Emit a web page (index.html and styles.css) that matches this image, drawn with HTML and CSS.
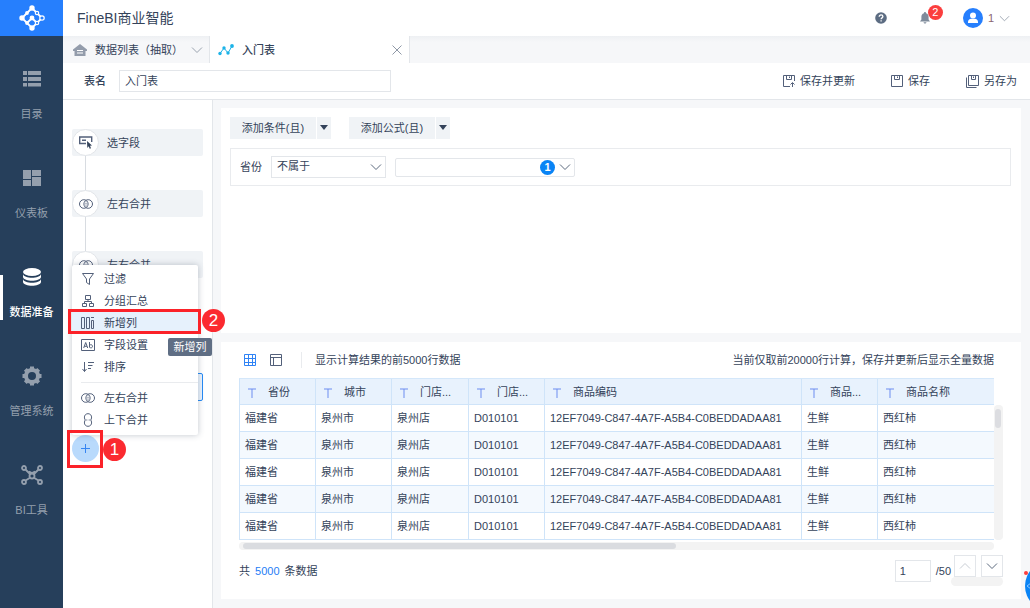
FILE: index.html
```html
<!DOCTYPE html>
<html lang="zh-CN">
<head>
<meta charset="utf-8">
<title>FineBI商业智能</title>
<link rel="stylesheet" href="styles.css">
</head>
<body>
<svg class="defs" aria-hidden="true">
  <symbol id="chevron" viewBox="0 0 12 12"><path d="M1 3.500 6 8.500 11 3.500"/></symbol>
  <symbol id="join" viewBox="0 0 14 12"><circle cx="4.800" cy="6" r="4.300"/><circle cx="9.200" cy="6" r="4.300"/><path d="M7 4.800v1M7 6.600v1"/></symbol>
  <symbol id="text-type" viewBox="0 0 10 10"><path d="M1 1h8M5 1v9"/></symbol>
</svg>
<div class="app">
  <nav class="sidebar">
    <a class="logo" href="#" aria-label="FineBI">
      <svg viewBox="0 0 28 28" width="28" height="28"><g fill="none" stroke="#fff" stroke-width="1.800"><path d="M14 4 4 14l10 10 10-10zM9 19l5-5 5 5"/></g><g fill="#fff"><circle cx="14" cy="4" r="2.700"/><circle cx="4" cy="14" r="2.700"/><circle cx="14" cy="24" r="2.700"/><circle cx="9" cy="9" r="1.900"/><circle cx="9" cy="19" r="1.900"/><circle cx="14" cy="14" r="2.400"/></g><g fill="#267ffd" stroke="#fff" stroke-width="1.200"><circle cx="19" cy="9" r="1.700"/><circle cx="19" cy="19" r="1.700"/><circle cx="24" cy="14" r="2.200"/></g></svg>
    </a>
    <a class="nav-item" href="#"><svg viewBox="0 0 20 20" width="20" height="20" fill="currentColor"><path d="M1 2h4v4H1zM6 2h13v4H6zM1 8h4v4H1zM6 8h13v4H6zM1 14h4v3.500H1zM6 14h13v3.500H6z"/></svg><span>目录</span></a>
    <a class="nav-item" href="#"><svg viewBox="0 0 20 20" width="20" height="20" fill="currentColor"><path d="M1 2h8v9H1zM10 2h9v6h-9zM1 12h8v6H1zM10 9h9v9h-9z"/></svg><span>仪表板</span></a>
    <a class="nav-item active" href="#"><svg viewBox="0 0 20 20" width="20" height="20" fill="currentColor"><ellipse cx="10" cy="5" rx="9" ry="4"/><path d="M1 7c1 5 17 5 18 0v3c-1 5-17 5-18 0zM1 12c1 5 17 5 18 0v3c-1 5-17 5-18 0z"/></svg><span>数据准备</span></a>
    <a class="nav-item" href="#"><svg viewBox="0 0 20 20" width="20" height="20"><circle cx="10" cy="10" r="6" fill="none" stroke="currentColor" stroke-width="4"/><path d="M10 .5v4M10 15.500v4M.5 10h4M15.500 10h4M3.300 3.300 6 6M14 14l2.700 2.700M3.300 16.700 6 14M14 6l2.700-2.700" stroke="currentColor" stroke-width="4"/></svg><span>管理系统</span></a>
    <a class="nav-item" href="#"><svg viewBox="0 0 22 20" width="22" height="20" fill="none" stroke="currentColor" stroke-width="1.800"><circle cx="3" cy="3" r="2"/><circle cx="19" cy="3" r="2"/><circle cx="3" cy="17" r="2"/><circle cx="19" cy="17" r="2"/><circle cx="11" cy="11" r="2.500"/><path d="m4.500 4.500 5 5M17.500 4.500l-5 5M4.500 15.500l5-3M17.500 15.500l-5-3M8 6.500l3 1.500 3-1.500"/></svg><span>BI工具</span></a>
  </nav>

  <div class="main">
    <header class="header">
      <h1>FineBI商业智能</h1>
      <div class="user-tools">
        <button class="bare" aria-label="帮助"><svg viewBox="0 0 12 12" width="12" height="12"><circle cx="6" cy="6" r="5.800" fill="#5c6c82"/><path d="M4.200 4.700c0-2.400 3.700-2.200 3.700-.1 0 1.300-1.800 1.300-1.800 2.600M6.100 8.300v1.300" fill="none" stroke="#fff" stroke-width="1.300"/></svg></button>
        <button class="bare bell" aria-label="消息"><svg viewBox="0 0 12 12" width="12" height="12" fill="#7f8b9b"><path d="M6 0c.7 0 1 .5 1 1.200C9 1.700 9.600 3.300 9.600 5v2.500L11 9.500H1l1.400-2V5C2.400 3.300 3 1.700 5 1.200 5 .5 5.300 0 6 0zM4.500 10.300h3c-.3 1.600-2.700 1.600-3 0z"/></svg><span class="count">2</span></button>
        <button class="bare account"><svg viewBox="0 0 20 20" width="20" height="20"><circle cx="10" cy="10" r="10" fill="#267ffd"/><circle cx="10" cy="7.500" r="3" fill="#fff"/><path d="M5 15v-1.500c0-1.500 2-2.800 3-2.800h4c1 0 3 1.300 3 2.800V15z" fill="#fff"/></svg><span>1</span><svg class="chev pale" width="11" height="11"><use href="#chevron"/></svg></button>
      </div>
    </header>

    <div class="tabs">
      <button class="tab"><svg viewBox="0 0 14 12" width="14" height="12"><path d="M7 0 0 5.500V7h1.500v5h11V7H14V5.500z" fill="#939cab"/><path d="M4 6.500h6M4 9h6" stroke="#fff"/></svg><span>数据列表（抽取）</span><svg class="chev pale" width="12" height="12"><use href="#chevron"/></svg></button>
      <div class="tab current"><svg viewBox="0 0 16 12" width="16" height="12" fill="#1cb3e8"><path d="M2 9.500 6 4l4 5 4-7" fill="none" stroke="#1cb3e8"/><circle cx="2" cy="9.500" r="1.700"/><circle cx="6" cy="4" r="1.700"/><circle cx="10" cy="9" r="1.700"/><circle cx="14" cy="2" r="1.900"/></svg><strong>入门表</strong><button class="bare close" aria-label="关闭"><svg viewBox="0 0 10 10" width="10" height="10" stroke="#8f98a6"><path d="m.5.5 9 9M9.500.5l-9 9"/></svg></button></div>
    </div>

    <div class="name-bar">
      <label for="table-name">表名</label>
      <input id="table-name" type="text" value="入门表">
      <div class="actions">
        <button class="bare"><svg viewBox="0 0 12 12" width="12" height="12" class="line"><path d="M11.500 6V.5H.5v11H7M3.500.5v4h5v-4M6.500 1.500v1.500M9.500 12V8M7.500 9.500l2-2 2 2"/></svg>保存并更新</button>
        <button class="bare"><svg viewBox="0 0 12 12" width="12" height="12" class="line"><path d="M.5.5h11v11H.5zM3.500.5v4h5v-4M6.500 1.500v1.500"/></svg>保存</button>
        <button class="bare"><svg viewBox="0 0 13 13" width="13" height="13" class="line"><path d="M2.500.5h10v10h-10zM5.500.5v4h4v-4M7.500 1.500v1.500M.5 2.500v10h10"/></svg>另存为</button>
      </div>
    </div>

    <div class="workspace">
      <aside class="steps">
        <ol>
          <li><button class="step"><span class="dot"><svg viewBox="0 0 14 13" width="14" height="13"><path d="M7 7.500H.7V1h12v5M3 4.300h4" fill="none" stroke="#53607a" stroke-width="1.400"/><path d="m8 5 5 4.500-2 .3 1 2.400-1.300.5-1-2.400L8.300 12z" fill="#34435a"/></svg></span>选字段</button></li>
          <li><button class="step"><span class="dot"><svg class="line" width="14" height="12"><use href="#join"/></svg></span>左右合并</button></li>
          <li class="long"><button class="step"><span class="dot"><svg class="line" width="14" height="12"><use href="#join"/></svg></span>左右合并</button></li>
          <li><button class="step selected" aria-label="当前步骤"><span class="dot"></span></button></li>
        </ol>
        <button class="add" aria-label="添加步骤"><svg viewBox="0 0 9 9" width="9" height="9" stroke="#3685f2"><path d="M4.500 0v9M0 4.500h9"/></svg></button>

        <div class="menu" role="menu">
          <button role="menuitem"><svg viewBox="0 0 14 14" width="14" height="14" class="line"><path d="M1.500 1.500h11L8.500 7v5.500l-3-2V7z"/></svg>过滤</button>
          <button role="menuitem"><svg viewBox="0 0 14 14" width="14" height="14" class="line"><path d="M4.500 1.500h5v4h-5zM1.500 9.500h4v3h-4zM8.500 9.500h4v3h-4zM7 5.500v2M3.500 9.500v-2h7v2"/></svg>分组汇总</button>
          <button role="menuitem" class="hover"><svg viewBox="0 0 14 14" width="14" height="14" class="line"><path d="M.5 1.500h3v11h-3zM5.500 1.500h3v11h-3zM10.500 4.500h2v8h-2zM10 1.500h3"/></svg>新增列</button>
          <button role="menuitem"><svg viewBox="0 0 14 14" width="14" height="14" class="line"><path d="M.5 1.500h13v11H.5zM2.700 10l2-5.500 2 5.500M3.500 8.300h2.400M8.500 4v5.500M8.500 7.500c1-1.500 3-.8 3 .8s-2 2.200-3 .7"/></svg>字段设置</button>
          <button role="menuitem"><svg viewBox="0 0 14 14" width="14" height="14" class="line"><path d="M3.500 2v9.500M1.500 9l2 2.500 2-2.500M7 2.500h6M7 5.500h4.500M7 8.500h3"/></svg>排序</button>
          <hr>
          <button role="menuitem"><svg class="line" width="14" height="12"><use href="#join"/></svg>左右合并</button>
          <button role="menuitem"><svg viewBox="0 0 14 14" width="14" height="14" class="line"><path d="M4.300 7C2.500 4.500 3.500.7 7 .7s4.500 3.800 2.700 6.300C11.500 9.500 10.500 13.300 7 13.300S2.500 9.500 4.300 7zM5.300 7h1M7.700 7h1"/></svg>上下合并</button>
        </div>
        <div class="tooltip" role="tooltip">新增列</div>
        <div class="frame frame-item"></div><div class="mark mark-item">2</div>
        <div class="frame frame-add"></div><div class="mark mark-add">1</div>
      </aside>

      <main class="content">
        <section class="card filters">
          <div class="button-row">
            <div class="split"><button>添加条件(且)</button><button aria-label="更多条件"><i></i></button></div>
            <div class="split"><button>添加公式(且)</button><button aria-label="更多公式"><i></i></button></div>
          </div>
          <div class="condition">
            <label for="operator">省份</label>
            <div class="picker"><select id="operator"><option>不属于</option></select><svg class="chev" width="12" height="12"><use href="#chevron"/></svg></div>
            <button class="values" aria-label="选择值"><span class="tally">1</span><svg class="chev" width="12" height="12"><use href="#chevron"/></svg></button>
          </div>
        </section>

        <section class="card preview">
          <div class="preview-bar">
            <button class="bare" aria-label="表格视图"><svg viewBox="0 0 12 12" width="12" height="12" fill="none" stroke="#2f83f5"><path d="M.5.5h11v11H.5zM4.500 0v12M8.500 0v12M0 4.500h12M0 8.500h12"/></svg></button>
            <button class="bare" aria-label="字段视图"><svg viewBox="0 0 12 12" width="12" height="12" class="line"><path d="M.5.5h11v11H.5zM0 3.500h12M3.500 3.500V12"/></svg></button>
            <span class="hint">显示计算结果的前5000行数据</span>
            <span class="note">当前仅取前20000行计算，保存并更新后显示全量数据</span>
          </div>
          <div class="grid">
            <table>
              <colgroup><col class="c-s"><col class="c-s"><col class="c-m"><col class="c-s"><col class="c-code"><col class="c-s"><col></colgroup>
              <thead><tr>
                <th><svg><use href="#text-type"/></svg>省份</th><th><svg><use href="#text-type"/></svg>城市</th><th><svg><use href="#text-type"/></svg>门店...</th><th><svg><use href="#text-type"/></svg>门店...</th><th><svg><use href="#text-type"/></svg>商品编码</th><th><svg><use href="#text-type"/></svg>商品...</th><th><svg><use href="#text-type"/></svg>商品名称</th>
              </tr></thead>
              <tbody>
                <tr><td>福建省</td><td>泉州市</td><td>泉州店</td><td>D010101</td><td>12EF7049-C847-4A7F-A5B4-C0BEDDADAA81</td><td>生鲜</td><td>西红柿</td></tr>
                <tr><td>福建省</td><td>泉州市</td><td>泉州店</td><td>D010101</td><td>12EF7049-C847-4A7F-A5B4-C0BEDDADAA81</td><td>生鲜</td><td>西红柿</td></tr>
                <tr><td>福建省</td><td>泉州市</td><td>泉州店</td><td>D010101</td><td>12EF7049-C847-4A7F-A5B4-C0BEDDADAA81</td><td>生鲜</td><td>西红柿</td></tr>
                <tr><td>福建省</td><td>泉州市</td><td>泉州店</td><td>D010101</td><td>12EF7049-C847-4A7F-A5B4-C0BEDDADAA81</td><td>生鲜</td><td>西红柿</td></tr>
                <tr><td>福建省</td><td>泉州市</td><td>泉州店</td><td>D010101</td><td>12EF7049-C847-4A7F-A5B4-C0BEDDADAA81</td><td>生鲜</td><td>西红柿</td></tr>
              </tbody>
            </table>
            <div class="scroll-y"><i></i></div>
            <div class="scroll-x"><i></i></div>
          </div>
          <footer class="pager">
            <p>共 <b>5000</b> 条数据</p>
            <input type="text" value="1" aria-label="页码"><span>/50</span>
            <div class="turn"><div class="turn-buttons"><button disabled aria-label="上一页"><svg class="chev up" width="12" height="12"><use href="#chevron"/></svg></button><button aria-label="下一页"><svg class="chev" width="12" height="12"><use href="#chevron"/></svg></button></div><div class="turn-track"></div></div>
          </footer>
        </section>
      </main>
    </div>
  </div>
  <div class="assistant"><button aria-label="助手"><svg viewBox="0 0 10 12" width="10" height="12"><path d="M6 3 2 6l4 3" fill="none" stroke="#8cc4ff"/></svg></button><i></i></div>
</div>
</body>
</html>
```
FILE: styles.css
```css
* { box-sizing: border-box; }
body, h1, p, ol { margin: 0; padding: 0; }
body, button, input, select {
  font-family: "Liberation Sans", "Noto Sans CJK SC", sans-serif;
  font-size: 11px;
  line-height: 16px;
  color: #34435a;
}
button { margin: 0; padding: 0; border: 0; background: none; text-align: left; }
input, select { border: 1px solid #e3e6ea; background: #fff; border-radius: 0; }
svg { display: block; flex: none; }
ol { list-style: none; }
.defs { position: absolute; width: 0; height: 0; }
.line { fill: none; stroke: #53607a; }
.chev { fill: none; stroke: #5c6a7e; }
.chev.pale { stroke: #9aa3af; }
.chev.up { transform: rotate(180deg); }
.bare { display: flex; align-items: center; gap: 5px; }

.app { position: relative; display: flex; min-height: 100vh; overflow: hidden; }

.sidebar { flex: none; width: 63px; background: #263f5b; }
.logo { display: flex; justify-content: center; align-items: center; height: 36px; margin-bottom: 32px; background: #267ffd; }
.nav-item {
  position: relative;
  display: flex;
  flex-direction: column;
  align-items: center;
  gap: 17px;
  height: 99px;
  color: #949fad;
  text-decoration: none;
}
.nav-item svg { margin-top: 1px; }
.nav-item.active { color: #fff; font-weight: 500; }
.nav-item.active::before { content: ""; position: absolute; left: 0; top: 9px; width: 3px; height: 45px; background: #fff; }

.main { flex: 1; min-width: 0; display: flex; flex-direction: column; }
.header { display: flex; justify-content: space-between; align-items: center; height: 36px; padding: 0 20px 0 14px; }
.header h1 { font-size: 14px; line-height: 20px; font-weight: 400; color: #34435a; }
.user-tools { display: flex; align-items: center; gap: 32px; }
.bell { position: relative; }
.count {
  position: absolute;
  left: 9px;
  top: -7px;
  width: 15px;
  height: 15px;
  border-radius: 50%;
  background: #fb3e3e;
  color: #fff;
  font-size: 11px;
  line-height: 15px;
  text-align: center;
}
.account { gap: 5px; color: #8a6571; }

.tabs { display: flex; height: 27px; background: linear-gradient(#eef0f3, #f6f7f9 6px); }
.tab { display: flex; align-items: center; gap: 8px; width: 147px; padding: 0 10px; border-right: 1px solid #e3e6ea; white-space: nowrap; }
.tab .chev { margin-left: auto; }
.tab.current { width: 200px; padding: 0 7px 0 8px; background: #fff; }
.tab strong { font-weight: 500; }
.close { margin-left: auto; }

.name-bar { display: flex; align-items: center; height: 37px; padding: 0 13px 0 21px; border-bottom: 1px solid #e3e6ea; }
.name-bar label { margin-right: 13px; font-weight: 500; }
.name-bar input { width: 272px; height: 22px; padding: 0 5px 2px; }
.actions { display: flex; gap: 36px; margin-left: auto; }

.workspace { flex: 1; display: flex; }
.steps { position: relative; flex: none; width: 150px; padding: 29px 9px 0; border-right: 1px solid #e3e6ea; }
.steps li { position: relative; height: 61px; }
.steps li::before { content: ""; position: absolute; left: 13px; top: 26px; bottom: 0; width: 1px; background: #d8dce1; }
.steps li.long { height: 122px; }
.step { display: flex; align-items: center; gap: 8px; width: 100%; height: 27px; border-radius: 2px; background: #f0f3f6; }
.step.selected { height: 28px; border: 1px solid #268bf5; background: #eaf3fd; }
.dot { position: relative; display: flex; align-items: center; justify-content: center; width: 27px; height: 27px; border: 1px solid #e2e5e9; border-radius: 50%; background: #fff; }
.add { display: flex; align-items: center; justify-content: center; width: 27px; height: 27px; margin-top: 1px; border-radius: 50%; background: #b9dafc; }

.menu { position: absolute; z-index: 1; left: 9px; top: 165px; width: 126px; padding: 3px 0 4px; border-radius: 2px; background: #fff; box-shadow: 0 0 6px rgba(50, 65, 90, .3); }
.menu button { display: flex; align-items: center; gap: 9px; width: 100%; height: 22px; padding-left: 9px; }
.menu button.hover { background: #e6f1fc; }
.menu hr { height: 1px; margin: 4px 0 4px 9px; border: 0; background: #e9ebee; }
.tooltip { position: absolute; z-index: 3; left: 105px; top: 238px; width: 44px; height: 18px; border-radius: 2px; background: #5f6e84; color: #fff; line-height: 18px; text-align: center; }
.frame { position: absolute; z-index: 2; border: 3px solid #fb2229; pointer-events: none; }
.frame-item { left: 5px; top: 209px; width: 133px; height: 25px; }
.frame-add { left: 4px; top: 330px; width: 36px; height: 38px; }
.mark { position: absolute; z-index: 3; width: 23px; height: 23px; border-radius: 50%; background: #fb2a30; color: #fff; font-size: 17px; line-height: 23px; text-align: center; }
.mark-item { left: 139px; top: 209px; }
.mark-add { left: 40px; top: 338px; }

.content { flex: 1; min-width: 0; display: flex; flex-direction: column; gap: 9px; padding: 8px 9px 9px 8px; background: #f6f7f9; }
.card { background: #fff; }
.filters { flex: 1; padding: 9px 10px 9px 9px; }
.button-row { display: flex; gap: 18px; margin-bottom: 9px; }
.split { display: flex; gap: 1px; }
.split button { display: flex; align-items: center; justify-content: center; width: 86px; height: 22px; background: #f0f3f6; }
.split button + button { width: 14px; }
.split i { margin-bottom: 2px; border: 4px solid transparent; border-top: 5px solid #34435a; border-bottom: 0; }
.condition { display: flex; align-items: center; height: 38px; padding: 0 9px; border: 1px solid #e9ebee; }
.condition label { margin-right: 9px; }
.picker { position: relative; margin-right: 9px; }
.picker select { width: 115px; height: 22px; padding: 0 5px 2px; appearance: none; }
.picker .chev { position: absolute; right: 4px; top: 5px; pointer-events: none; }
.values { display: flex; align-items: center; justify-content: flex-end; gap: 4px; width: 180px; height: 19px; padding-right: 3px; border: 1px solid #e3e6ea; border-radius: 2px; }
.tally { width: 15px; height: 15px; border-radius: 50%; background: #0a84f5; color: #fff; font-weight: 700; line-height: 15px; text-align: center; }

.preview { padding: 8px 18px 13px; }
.preview-bar { display: flex; align-items: center; gap: 14px; height: 20px; margin: 0 9px 8px 5px; white-space: nowrap; }
.hint { margin-left: 5px; padding-left: 13px; border-left: 1px solid #e9ebee; }
.note { margin-left: auto; }
.grid { display: grid; grid-template-columns: minmax(0, 1fr) 9px; }
table { width: 100%; table-layout: fixed; border-collapse: separate; border-spacing: 0; border-top: 1px solid #d4e7fa; }
.c-s { width: 76px; }
.c-m { width: 77px; }
.c-code { width: 257px; }
th, td { height: 27px; padding: 0 5px; border-left: 1px solid #cfe4f9; border-bottom: 1px solid #cfe4f9; font-weight: 400; text-align: left; white-space: nowrap; }
th { height: 26px; padding-left: 7px; background: #e8f2fd; }
th svg { display: inline-block; width: 10px; height: 10px; margin-right: 11px; vertical-align: -2px; fill: none; stroke: #6c8df0; }
tbody tr:nth-child(even) td { background: #f4f9fe; }
.scroll-y { margin: 27px 0 0; padding: 4px 1px; border-radius: 4px; background: #f3f3f3; }
.scroll-y i { display: block; width: 6px; height: 19px; border-radius: 3px; background: #dcdde1; }
.scroll-x { margin-top: 2px; height: 8px; padding: 1px 4px; border-radius: 4px; background: #f3f3f3; }
.scroll-x i { display: block; width: 58%; height: 6px; border-radius: 3px; background: #dadce0; }
.pager { display: flex; align-items: center; margin-top: 5px; }
.pager p { margin-right: auto; }
.pager b { margin: 0 2px; color: #1f7df5; font-weight: 400; }
.pager input { width: 36px; height: 22px; margin-right: 5px; padding: 0 4px; }
.turn-buttons { display: flex; justify-content: flex-end; gap: 5px; }
.turn button { display: flex; align-items: center; justify-content: center; width: 22px; height: 22px; border: 1px solid #e3e6ea; }
.turn button:disabled .chev { stroke: #c9ced5; }
.turn-track { width: 52px; height: 9px; border-radius: 5px; background: #f3f3f3; }

.assistant { position: absolute; right: -45px; bottom: -3px; z-index: 4; }
.assistant button { display: flex; align-items: center; width: 50px; height: 50px; border-radius: 50%; background: #0a84f5; }
.assistant i { position: absolute; left: -1px; top: 10px; width: 4px; height: 4px; border-radius: 50%; background: #fb3e3e; }
```
